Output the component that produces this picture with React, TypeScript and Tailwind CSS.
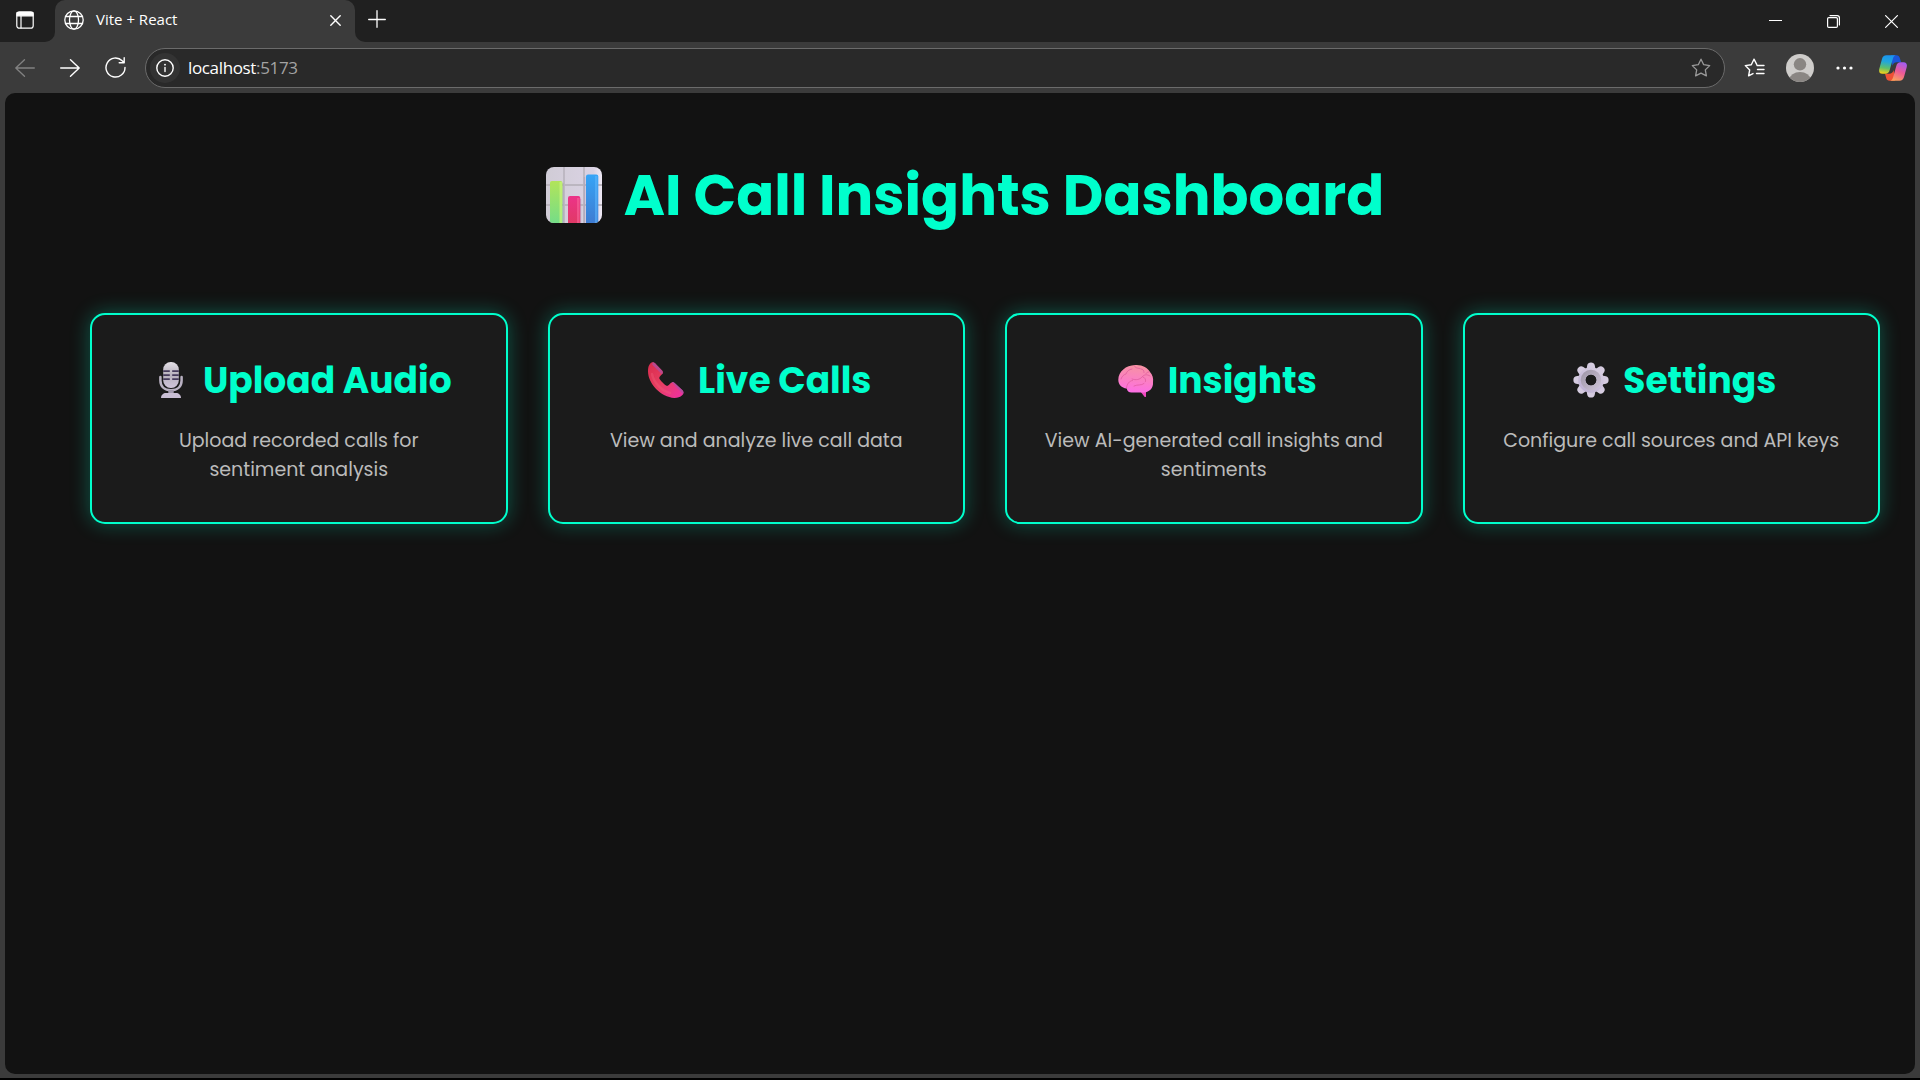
import type { ReactNode } from 'react'

function ChartIcon() {
  return (
    <svg width="56" height="56" viewBox="0 0 56 56" className="shrink-0">
      <defs>
        <linearGradient id="cbg" x1="0" y1="0" x2="1" y2="0">
          <stop offset="0" stopColor="#d0ccd6" />
          <stop offset=".85" stopColor="#dad2e3" />
          <stop offset="1" stopColor="#efe9f5" />
        </linearGradient>
        <linearGradient id="cgreen" x1="0" y1="0" x2="0" y2="1">
          <stop offset="0" stopColor="#b2e45a" />
          <stop offset="1" stopColor="#6fdc8c" />
        </linearGradient>
        <linearGradient id="cred" x1="0" y1="0" x2="0" y2="1">
          <stop offset="0" stopColor="#ec3389" />
          <stop offset="1" stopColor="#df3a62" />
        </linearGradient>
        <linearGradient id="cblue" x1="0" y1="0" x2="0" y2="1">
          <stop offset="0" stopColor="#36a4f6" />
          <stop offset="1" stopColor="#3f79cf" />
        </linearGradient>
        <clipPath id="cclip">
          <rect width="56" height="56" rx="8" />
        </clipPath>
      </defs>
      <g clipPath="url(#cclip)">
        <rect width="56" height="56" fill="url(#cbg)" />
        <path d="M18 0v56M38 0v56M0 18h56M0 38h56" stroke="#bbb6c0" strokeWidth="1.8" fill="none" />
        <path d="M17 16v40M34.5 32v24M38.5 10v46" stroke="#a99cb8" strokeWidth="1.5" opacity=".5" />
        <rect x="4" y="14" width="12.5" height="46" rx="2" fill="url(#cgreen)" />
        <rect x="13.5" y="15" width="2.5" height="41" fill="#c9f57a" opacity=".7" />
        <rect x="22" y="29" width="12.3" height="30" rx="2" fill="url(#cred)" />
        <rect x="31" y="31" width="2.5" height="26" fill="#f8649a" opacity=".6" />
        <rect x="40" y="7.500" width="12.3" height="52" rx="2" fill="url(#cblue)" />
        <rect x="49" y="9" width="2.500" height="48" fill="#5cb6fb" opacity=".6" />
      </g>
    </svg>
  )
}

function MicIcon() {
  return (
    <svg width="36" height="36" viewBox="0 0 36 36" className="shrink-0">
      <defs>
        <linearGradient id="mic" x1="0" y1="0" x2="0" y2="1">
          <stop offset="0" stopColor="#e4e0e6" />
          <stop offset=".5" stopColor="#b7b0bd" />
          <stop offset="1" stopColor="#cfc4da" />
        </linearGradient>
      </defs>
      <path d="M7.400 15v3.500c0 6 4.200 9.800 10.600 9.800s10.600-3.800 10.600-9.800V15" fill="none" stroke="#b9b1c2" strokeWidth="2.500" strokeLinecap="round" />
      <rect x="15.300" y="28" width="5.400" height="4" fill="#a39aae" />
      <path d="M8 36c0-3 2.300-5 5-5h10c2.700 0 5 2 5 5z" fill="#cabfd5" />
      <rect x="10.200" y="0" width="15.600" height="26" rx="7.500" fill="url(#mic)" />
      <path d="M10.200 9.200h6.600M19.200 9.200h6.600M10.200 13.200h6.600M19.200 13.200h6.600M10.200 17.200h6.600M19.200 17.200h6.600" stroke="#453a5c" strokeWidth="1.700" />
    </svg>
  )
}

function PhoneIcon() {
  return (
    <svg width="36" height="36" viewBox="0 0 36 36" className="shrink-0">
      <defs>
        <linearGradient id="ph" x1="0" y1="0" x2="1" y2="1">
          <stop offset="0" stopColor="#d92b4c" />
          <stop offset=".5" stopColor="#e83f63" />
          <stop offset="1" stopColor="#ef2fa6" />
        </linearGradient>
      </defs>
      <path d="M2.500 1.200C3.800-.2 5.600-.2 7 1.200l7 7.300c1.100 1.200 1.100 2.600 0 3.800-1.900 2-3.600 3.100-2.200 5 1.500 2.300 3.900 4.600 6.200 6.200 1.800 1.200 2.900-.6 4.800-2.400 1.200-1.100 2.600-1.100 3.800 0l7.700 7.200c1.600 1.500 1.500 3.200.1 4.600-2.300 2.300-4.700 3-8 3C13 35.600 0 21.500 0 9.300 0 6 .4 3.300 2.500 1.200Z" fill="url(#ph)" />
      <path d="M4.500.3C5.400.2 6.300.5 7 1.200l7 7.300c1.100 1.200 1.100 2.600 0 3.800L4.300 2.800z" fill="#b9488f" />
      <path d="M23.800 20.300c1-.5 2-.2 2.800.6l7.700 7.200c1.500 1.500 1.500 2.900.6 4z" fill="#b84aa0" />
      <path d="M4 12c1.500 8 9 16.500 18 19" fill="none" stroke="#f2607c" strokeWidth="2.500" strokeLinecap="round" opacity=".35" />
    </svg>
  )
}

function BrainIcon() {
  return (
    <svg width="36" height="36" viewBox="0 0 36 36" className="shrink-0">
      <defs>
        <linearGradient id="br" x1=".5" y1="0" x2=".4" y2="1">
          <stop offset="0" stopColor="#f793a2" />
          <stop offset=".55" stopColor="#fb7fc4" />
          <stop offset="1" stopColor="#fd6ee6" />
        </linearGradient>
      </defs>
      <path d="M22 29h6v5.200c0 1-.9 1.200-1.500.5z" fill="#f048c0" />
      <path d="M17 3C24 2.400 29.500 5.500 32 10c2.600 2.500 3.600 6.500 3 10.500.4 5.500-3.500 9.500-9 10H13.500c-2.800 0-4.200-1.600-4.800-4C3.500 26 .3 22.500.3 17.800.4 9.500 8 3.300 17 3Z" fill="url(#br)" />
      <path d="M3 17c1-3 3-4.500 5-5 1-3 3-4.500 6-5M16 3.500c1 2 3 3 6 3M23 7c2 0 3 1.500 3 3.500M31 10c-1.500 0-2.500.6-3 1.500M8.500 26c.5-4 2.500-7 6-7.500M14 17c4 1.500 8 .5 10-2s5-3 8-1M25 15c2 .5 3 2.500 2.500 4.500M16 24c4-2 7 0 10-2.500" fill="none" stroke="#dd5a9b" strokeWidth="1" strokeLinecap="round" opacity=".7" />
    </svg>
  )
}

const teeth = [0, 45, 90, 135, 180, 225, 270, 315]

function GearIcon() {
  return (
    <svg width="36" height="36" viewBox="0 0 36 36" className="shrink-0">
      <defs>
        <linearGradient id="gr" gradientUnits="userSpaceOnUse" x1="28" y1="4" x2="8" y2="32">
          <stop offset="0" stopColor="#d9d0e2" />
          <stop offset="1" stopColor="#bcaed2" />
        </linearGradient>
        <linearGradient id="gr2" x1="0" y1="0" x2="1" y2="1">
          <stop offset="0" stopColor="#a299ab" />
          <stop offset="1" stopColor="#c9bfd2" />
        </linearGradient>
      </defs>
      <g fill="url(#gr)">
        {teeth.map((a) => (
          <path key={a} d="M13 10 14.300 3c.3-1.700 1.700-2.600 3.700-2.600s3.400.9 3.700 2.600L23 10z" transform={`rotate(${a} 18 18)`} />
        ))}
      </g>
      <circle cx="18" cy="18" r="9.300" fill="none" stroke="url(#gr)" strokeWidth="7" />
      <circle cx="18" cy="18" r="7.800" fill="none" stroke="url(#gr2)" strokeWidth="5" />
      <circle cx="18" cy="18" r="5.300" fill="#1b1b1b" />
    </svg>
  )
}

function CopilotIcon() {
  return (
    <svg width="28" height="26" viewBox="0 0 28 26" className="shrink-0">
      <defs>
        <linearGradient id="cp1" x1=".55" y1="0" x2=".4" y2="1">
          <stop offset="0" stopColor="#1a93ee" />
          <stop offset=".35" stopColor="#21a6dc" />
          <stop offset=".7" stopColor="#5fc06a" />
          <stop offset="1" stopColor="#f2cf1b" />
        </linearGradient>
        <linearGradient id="cp2" x1=".7" y1="0" x2=".3" y2="1">
          <stop offset="0" stopColor="#a45cf0" />
          <stop offset=".5" stopColor="#ee5a96" />
          <stop offset="1" stopColor="#fba25e" />
        </linearGradient>
      </defs>
      <path d="M12 .3h5.400c2 0 2.900 1.200 3.400 2.800l1.300 4.200h-4.200c-2.500 0-3.600 1-4.400 3.500z" fill="#1b55d8" />
      <path d="M16 25.700h-5.400c-2 0-2.900-1-3.400-2.700L6 18.700h4.200c2.500 0 3.600-1.200 4.400-3.700z" fill="#ef5135" />
      <path d="M7.500.3h9.300c-1.700.3-2.500 2-3 3.800L10.700 15c-.7 2.600-2 3.800-4.200 3.800H3.300C.7 18.800-.4 16.800.3 13.800L3 4C3.700 1.600 5 .3 7.500.3Z" fill="url(#cp1)" />
      <path d="M20.500 25.700h-9.300c1.700-.3 2.500-2 3-3.800L17.300 11c.7-2.600 2-3.800 4.200-3.800h3.200c2.600 0 3.700 2 3 5L25 22c-.7 2.400-2 3.700-4.500 3.700Z" fill="url(#cp2)" />
    </svg>
  )
}

function Line({ children, w, h, className, sw = 1.4 }: { children: ReactNode; w: number; h: number; className?: string; sw?: number }) {
  return (
    <svg width={w} height={h} viewBox={`0 0 ${w} ${h}`} fill="none" stroke="currentColor" strokeWidth={sw} strokeLinecap="round" strokeLinejoin="round" className={`shrink-0 ${className ?? ''}`}>
      {children}
    </svg>
  )
}

function TabStrip() {
  return (
    <div className="flex h-[42px] shrink-0 text-white">
      <div className="flex w-[55px] items-start rounded-br-[10px] bg-[#202020] pt-[11px] pl-4">
        <Line w={18} h={18} sw={1.2}>
          <rect x=".8" y=".8" width="16.400" height="16.400" rx="2.500" />
          <path d="M1 1.500h16v3.300H1z" fill="currentColor" />
          <path d="M5 5v12" strokeWidth="1.200" />
        </Line>
      </div>
      <div className="w-[300px] bg-[#202020]">
        <div className="flex h-full items-start rounded-t-[10px] bg-[#3b3b3b] pl-[9px]">
          <Line w={20} h={20} className="mt-[10px]" sw={1.3}>
            <circle cx="10" cy="10" r="9.200" />
            <ellipse cx="10" cy="10" rx="4.500" ry="9.200" />
            <path d="M1.500 6.500h17M1.500 13.500h17" />
          </Line>
          <span className="mt-[8px] ml-3 text-[15px] leading-[22px] font-['Open_Sans',sans-serif]">Vite + React</span>
          <Line w={11} h={11} className="mt-[15px] mr-[14px] ml-auto" sw={1.4}>
            <path d="m.8.8 9.400 9.400M10.200.8.8 10.200" />
          </Line>
        </div>
      </div>
      <div className="flex flex-1 items-start rounded-bl-[10px] bg-[#202020] pl-[13px]">
        <Line w={18} h={18} className="mt-[10px]" sw={1.3}>
          <path d="M9 .7v16.600M.7 9.500h16.600" />
        </Line>
        <Line w={13} h={13} className="mt-[14px] ml-auto" sw={1.2}>
          <path d="M.5 6.500h12" />
        </Line>
        <Line w={13} h={13} className="mt-[15px] ml-[45px]" sw={1.2}>
          <rect x=".6" y="2.600" width="9.800" height="9.800" rx="1.200" />
          <path d="M3 .6h7.200c1.300 0 2.200.9 2.200 2.200V10" />
        </Line>
        <Line w={13} h={13} className="mt-[15px] mr-[22px] ml-[45px]" sw={1.2}>
          <path d="m.6.6 11.800 11.800M12.400.6.6 12.400" />
        </Line>
      </div>
    </div>
  )
}

const star = 'M10 1.200 12.700 6.700l6 .9-4.400 4.300 1.100 6L10 15.100 4.600 17.900l1.100-6L1.300 7.600l6-.9z'

function Toolbar() {
  return (
    <div className="flex h-[51px] shrink-0 items-center text-white">
      <Line w={20} h={18} className="ml-[15px] text-[#828282]" sw={1.3}>
        <path d="M19.300 9H.8M9.500.8.8 9l8.700 8.200" />
      </Line>
      <Line w={20} h={18} className="ml-[25px]">
        <path d="M.7 9h18.500M10.500.8 19.200 9l-8.700 8.200" />
      </Line>
      <Line w={21} h={21} className="ml-[25px]">
        <path d="M20 10.500A9.500 9.500 0 1 1 17.200 3.800L19 5.500M19.200.8v5h-5" />
      </Line>
      <div className="ml-[19px] flex h-10 w-[1580px] items-center rounded-full border border-[#6b6b6b] bg-[#292929] pr-[13px] pl-[4px]">
        <span className="flex size-[30px] items-center justify-center rounded-full bg-[#333]">
          <Line w={18} h={18}>
            <circle cx="9" cy="9" r="8.200" />
            <path d="M9 8.500v4" />
            <path d="M9 5.600v.1" strokeWidth="1.800" />
          </Line>
        </span>
        <span className="ml-[8px] text-[17px] leading-[24px] tracking-[-0.35px] font-['Open_Sans',sans-serif]">
          localhost<span className="text-[#a3a3a3]">:5173</span>
        </span>
        <Line w={20} h={19} className="ml-auto text-[#9a9a9a]" sw={1.3}>
          <path d={star} />
        </Line>
      </div>
      <Line w={21} h={19} className="ml-[19px]">
        <path d="M12.700 6.300 10 1.200 7.300 6.700l-6 .9 4.400 4.300-1.100 6L9 15.600M13 7.500h7M13.500 11.500H20M12.500 15.500H20" />
      </Line>
      <svg width="28" height="28" viewBox="0 0 28 28" className="ml-[21px] shrink-0">
        <defs>
          <clipPath id="av"><circle cx="14" cy="14" r="14" /></clipPath>
        </defs>
        <circle cx="14" cy="14" r="14" fill="#cfcdcb" />
        <g clipPath="url(#av)" fill="#8a8683">
          <circle cx="14" cy="10.300" r="6.200" />
          <ellipse cx="14" cy="25.500" rx="10.500" ry="7.500" />
        </g>
      </svg>
      <svg width="17" height="4" viewBox="0 0 17 4" fill="currentColor" className="ml-[22px] shrink-0">
        <circle cx="2" cy="2" r="1.600" />
        <circle cx="8.500" cy="2" r="1.600" />
        <circle cx="15" cy="2" r="1.600" />
      </svg>
      <div className="ml-[26px]"><CopilotIcon /></div>
    </div>
  )
}

const cards = [
  { icon: <MicIcon />, title: 'Upload Audio', text: 'Upload recorded calls for sentiment analysis' },
  { icon: <PhoneIcon />, title: 'Live Calls', text: 'View and analyze live call data' },
  { icon: <BrainIcon />, title: 'Insights', text: 'View AI-generated call insights and sentiments' },
  { icon: <GearIcon />, title: 'Settings', text: 'Configure call sources and API keys' },
]

export default function App() {
  return (
    <div className="flex h-[1080px] w-[1920px] flex-col overflow-hidden border-b-2 border-black bg-[#3b3b3b]">
      <TabStrip />
      <Toolbar />
      <main className="mx-[5px] mb-1 flex-1 rounded-[10px] bg-[#121212] pt-[60px] text-center text-[#00ffcc] font-['Poppins','Inter',sans-serif]">
        <h1 className="flex items-center justify-center pl-[10px] text-[56px] leading-[84px] font-bold">
          <ChartIcon />
          <span className="mt-px -mb-px ml-[22px]">AI Call Insights Dashboard</span>
        </h1>
        <div className="mt-[76px] mr-[35px] ml-[85px] grid grid-cols-4 gap-10">
          {cards.map((c) => (
            <section key={c.title} className="h-[211px] rounded-[15px] border-2 border-[#00ffcc] bg-[#1b1b1b] px-[37px] pt-[38px] shadow-[0_0_20px_rgba(0,255,204,0.3)]">
              <h2 className="flex items-center justify-center pl-[7px] text-[36px] leading-[54px] font-bold">
                {c.icon}
                <span className="mt-px -mb-px ml-[14px]">{c.title}</span>
              </h2>
              <p className="mt-[19px] text-[19px] leading-[29px] text-[#bbb]">{c.text}</p>
            </section>
          ))}
        </div>
      </main>
    </div>
  )
}
